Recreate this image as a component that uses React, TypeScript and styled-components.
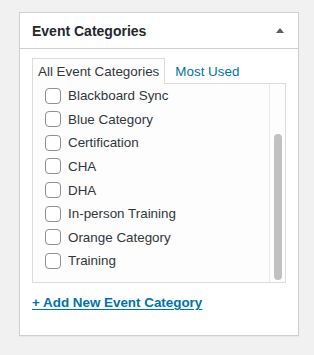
import styled, { createGlobalStyle } from 'styled-components';

const GlobalStyle = createGlobalStyle`
  body {
    margin: 0;
    background: #f1f1f1;
    font-family: "Liberation Sans", Arial, sans-serif;
  }
`;

const Page = styled.div`
  padding: 12px 0 20px 19px;
`;

const Panel = styled.div`
  width: 280px;
  box-sizing: border-box;
  background: #fff;
  border: 1px solid #ccd0d4;
  box-shadow: 0 1px 1px rgba(0, 0, 0, 0.04);
`;

const Header = styled.div`
  height: 35px;
  display: flex;
  align-items: center;
  justify-content: space-between;
  padding: 0 12px;
  border-bottom: 1px solid #ccd0d4;
`;

const Title = styled.h2`
  margin: 0;
  font-size: 14px;
  font-weight: 700;
  color: #23282d;
  padding-top: 1px;
`;

const Toggle = styled.span`
  width: 0;
  height: 0;
  margin-right: 2px;
  border-left: 4px solid transparent;
  border-right: 4px solid transparent;
  border-bottom: 5px solid #555d66;
`;

const Body = styled.div`
  padding: 8px 12px 0;
  height: 286px;
  box-sizing: border-box;
`;

const Tabs = styled.div`
  display: flex;
  align-items: flex-end;
  height: 26px;
`;

const Tab = styled.div<{ $active?: boolean }>`
  height: 26px;
  box-sizing: border-box;
  padding: 0 5px;
  display: flex;
  align-items: center;
  font-size: 13.4px;
  color: ${p => (p.$active ? '#32373c' : '#0073aa')};
  border: 1px solid ${p => (p.$active ? '#dcdcde' : 'transparent')};
  border-bottom: none;
  background: ${p => (p.$active ? '#fdfdfd' : 'transparent')};
  margin-bottom: -1px;
  position: relative;
  z-index: 1;
  margin-right: 4px;
`;

const ListBox = styled.div`
  display: flex;
  width: 254px;
  height: 200px;
  box-sizing: border-box;
  border: 1px solid #dcdcde;
  background: #fdfdfd;
`;

const List = styled.ul`
  flex: 1;
  list-style: none;
  margin: 0;
  padding: 0 0 0 12px;
`;

const Item = styled.li`
  height: 23.57px;
  display: flex;
  align-items: center;
  gap: 7px;
  font-size: 13.4px;
  color: #32373c;
`;

const Box = styled.span`
  width: 16px;
  height: 16px;
  box-sizing: border-box;
  border: 1px solid #8c8f94;
  border-radius: 4px;
  background: #fff;
  flex-shrink: 0;
`;

const Track = styled.div`
  width: 15px;
  border-left: 1px solid #e8e8e8;
  display: flex;
  flex-direction: column;
  justify-content: flex-end;
  align-items: center;
  padding-bottom: 2px;
`;

const Thumb = styled.div`
  width: 8px;
  height: 146px;
  border-radius: 4px;
  background: #c1c1c1;
`;

const AddLink = styled.a`
  display: inline-block;
  margin-top: 12px;
  font-size: 13.4px;
  font-weight: 700;
  color: #0073aa;
  text-decoration: underline;
  text-underline-offset: 2px;
`;

const categories = [
  'Blackboard Sync',
  'Blue Category',
  'Certification',
  'CHA',
  'DHA',
  'In-person Training',
  'Orange Category',
  'Training',
];

export default function App() {
  return (
    <Page>
      <GlobalStyle />
      <Panel>
        <Header>
          <Title>Event Categories</Title>
          <Toggle />
        </Header>
        <Body>
          <Tabs>
            <Tab $active>All Event Categories</Tab>
            <Tab>Most Used</Tab>
          </Tabs>
          <ListBox>
            <List>
              {categories.map(c => (
                <Item key={c}>
                  <Box />
                  {c}
                </Item>
              ))}
            </List>
            <Track>
              <Thumb />
            </Track>
          </ListBox>
          <AddLink href="#">+ Add New Event Category</AddLink>
        </Body>
      </Panel>
    </Page>
  );
}
